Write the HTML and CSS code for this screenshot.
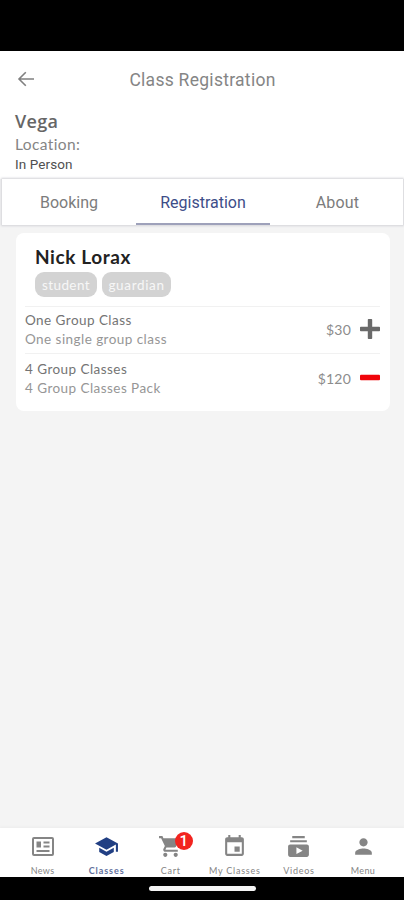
FILE: index.html
```html
<!DOCTYPE html>
<html lang="en">
<head>
<meta charset="utf-8">
<title>Class Registration</title>
<link rel="stylesheet" href="styles.css">
</head>
<body>
<div class="screen">
  <div class="status-bar"></div>
  <header class="header">
    <svg class="back" viewBox="0 0 22 22"><path d="M19 11H4.200M10.800 4.200 4 11l6.800 6.800"/></svg>
    <h1>Class Registration</h1>
  </header>
  <section class="info">
    <h2>Vega</h2>
    <p class="location">Location:</p>
    <p class="mode">In Person</p>
  </section>
  <nav class="tabs">
    <a class="tab">Booking</a>
    <a class="tab active">Registration</a>
    <a class="tab about">About</a>
  </nav>
  <main>
    <section class="card">
      <h3>Nick Lorax</h3>
      <div class="tags"><span class="tag">student</span><span class="tag guardian">guardian</span></div>
      <div class="item first">
        <div class="desc"><p class="name">One Group Class</p><p class="sub">One single group class</p></div>
        <span class="price">$30</span>
        <svg class="action" viewBox="0 0 20 20"><path d="M8.600 0h2.800q.8 0 .8.8v7h7q.8 0 .8.8v2.800q0 .8-.8.8h-7v7q0 .8-.8.8H8.600q-.8 0-.8-.8v-7h-7q-.8 0-.8-.8V8.600q0-.8.8-.8h7v-7q0-.8.8-.8z" fill="#6a6a6a"/></svg>
      </div>
      <div class="item last">
        <div class="desc"><p class="name">4 Group Classes</p><p class="sub">4 Group Classes Pack</p></div>
        <span class="price">$120</span>
        <svg class="action" viewBox="0 0 20 20"><rect y="6.700" width="20" height="5.600" rx="1" fill="#f0050a"/></svg>
      </div>
    </section>
  </main>
  <nav class="bottom">
    <a><svg class="news" viewBox="0 0 24 24"><path fill-rule="evenodd" d="M3 2.500h18q2 0 2 2v15q0 2-2 2H3q-2 0-2-2v-15q0-2 2-2zm0 2v15h18v-15zm2.500 2.500h4.500v6H5.500zm7 0h6v2h-6zm0 4h6v2h-6zm-7 4.500h13v2h-13z"/></svg><span>News</span></a>
    <a class="active"><svg viewBox="0 0 24 24"><path d="M5 13.180v4L12 21l7-3.820v-4L12 17l-7-3.820zM12 3 1 9l11 6 9-4.910V17h2V9L12 3z"/></svg><span>Classes</span></a>
    <a><svg viewBox="0 0 24 24"><path d="M7 18c-1.100 0-1.990.9-1.990 2S5.900 22 7 22s2-.9 2-2-.9-2-2-2zM1 2v2h2l3.600 7.590-1.350 2.450c-.16.28-.25.61-.25.96 0 1.100.9 2 2 2h12v-2H7.420c-.14 0-.25-.11-.25-.25l.03-.12.9-1.630h7.450c.75 0 1.410-.41 1.750-1.030l3.580-6.490A1 1 0 0 0 20 4H5.210l-.94-2H1zm16 16c-1.100 0-1.990.9-1.990 2s.89 2 1.990 2 2-.9 2-2-.9-2-2-2z"/></svg><b class="badge">1</b><span class="wide">Cart</span></a>
    <a><svg viewBox="0 0 24 24"><path d="M17 12h-5v5h5v-5zM16 1v2H8V1H6v2H5c-1.110 0-1.990.9-1.990 2L3 19c0 1.100.89 2 2 2h14c1.100 0 2-.9 2-2V5c0-1.100-.9-2-2-2h-1V1h-2zm3 18H5V8h14v11z"/></svg><span class="wide">My Classes</span></a>
    <a><svg viewBox="0 0 24 24"><path d="M20 8H4V6h16v2zm-2-6H6v2h12V2zm4 10v8c0 1.100-.9 2-2 2H4c-1.100 0-2-.9-2-2v-8c0-1.100.9-2 2-2h16c1.100 0 2 .9 2 2zm-6 4-6-3.270v6.530L16 16z"/></svg><span class="wide">Videos</span></a>
    <a><svg viewBox="0 0 24 24"><path d="M12 12c2.210 0 4-1.790 4-4s-1.790-4-4-4-4 1.790-4 4 1.790 4 4 4zm0 2c-2.670 0-8 1.340-8 4v2h16v-2c0-2.660-5.330-4-8-4z"/></svg><span>Menu</span></a>
  </nav>
  <div class="gesture"><i></i></div>
</div>
</body>
</html>
```
FILE: styles.css
```css
* { box-sizing: border-box; margin: 0; padding: 0; }
body { background: #f4f4f4; font-family: Lato, "Open Sans", sans-serif; color: #777; }
.screen { width: 404px; height: 900px; display: flex; flex-direction: column; background: #f4f4f4; overflow: hidden; }
.status-bar { height: 51px; background: #000; flex: none; }
.header { height: 55px; flex: none; background: #fff; display: grid; grid-template-columns: 52px 1fr 52px; align-items: center; padding-top: 2px; }
.back { width: 22px; height: 22px; margin: 0 0 2px 15px; fill: none; stroke: #808080; stroke-width: 1.6; }
h1 { font: 400 17.5px/24px Roboto, sans-serif; letter-spacing: .28px; color: #858585; text-align: center; padding-left: 1px; }
.info { height: 73px; flex: none; background: #fff; padding: 3px 15px 0; }
h2 { font: 600 18px/24px "Open Sans", sans-serif; letter-spacing: .3px; color: #666; }
.location { font-size: 15.5px; line-height: 22px; letter-spacing: .4px; color: #858585; }
.mode { font: 400 13.5px/18px Roboto, sans-serif; letter-spacing: .1px; color: #505050; }
.tabs { height: 46px; flex: none; margin: 0 1px 0 2px; background: #fff; display: grid; grid-template-columns: 134px 134px 1fr; box-shadow: 0 0 2px 1px #d4d4d8; }
.tab { display: flex; align-items: center; justify-content: center; padding-top: 4px; font: 400 16px/22px Roboto, sans-serif; color: #7c7c7c; border-bottom: 2px solid transparent; }
.tab.active { color: #3d4d88; border-bottom-color: #9ea1ba; }
.about { letter-spacing: .2px; padding-left: 2px; }
main { flex: 1; padding: 8px 14px 0 16px; }
.card { height: 178px; background: #fff; border-radius: 8px; padding: 12px 10px 0 9px; }
h3 { font: 700 19px/23px Lato, sans-serif; letter-spacing: .6px; color: #222; padding-left: 10px; }
.tags { display: flex; gap: 5px; padding: 4px 0 9px 10px; }
.tag { width: 62px; height: 25px; border-radius: 9px; background: #d3d3d3; color: #f7f7f7; font-size: 13.5px; line-height: 26px; letter-spacing: .4px; text-align: center; }
.guardian { width: 69px; letter-spacing: .65px; }
.item { height: 47px; border-top: 1px solid #f1f1f1; display: flex; align-items: center; }
.item.first { padding-bottom: 1px; }
.item.last { height: 50px; }
.desc { flex: 1; line-height: 19px; font-size: 13.5px; letter-spacing: .45px; white-space: nowrap; }
.name { color: #747474; }
.sub { color: #969696; }
.price { font-size: 14px; letter-spacing: .2px; color: #8c8c8c; margin: 0 9px 1px 0; }
.action { width: 20px; height: 20px; margin-bottom: 1px; }
.bottom { height: 49px; flex: none; background: #fff; display: grid; grid-template-columns: repeat(6, 64.1px); padding-left: 10.5px; box-shadow: 0 -1px 2px #ececec; }
.bottom a { display: flex; flex-direction: column; align-items: center; position: relative; padding-top: 6px; color: #858585; font-size: 9px; line-height: 12px; letter-spacing: .35px; }
.bottom svg { width: 25px; height: 25px; fill: currentColor; margin-bottom: 6px; flex: none; }
.bottom .news { width: 24px; }
.bottom .wide { letter-spacing: .75px; }
.bottom .active { color: #213f83; }
.bottom .active span { font-weight: 700; letter-spacing: .9px; color: #62709d; }
.badge { position: absolute; left: 36px; top: 4px; width: 18px; height: 18px; border-radius: 50%; background: #f2241f; color: #fff; font: 500 15px/18px Roboto, sans-serif; letter-spacing: 0; text-align: center; }
.gesture { height: 23px; flex: none; background: #000; display: flex; justify-content: center; padding-top: 9px; }
.gesture i { width: 107px; height: 5px; border-radius: 3px; background: #f4f4f4; }
```
